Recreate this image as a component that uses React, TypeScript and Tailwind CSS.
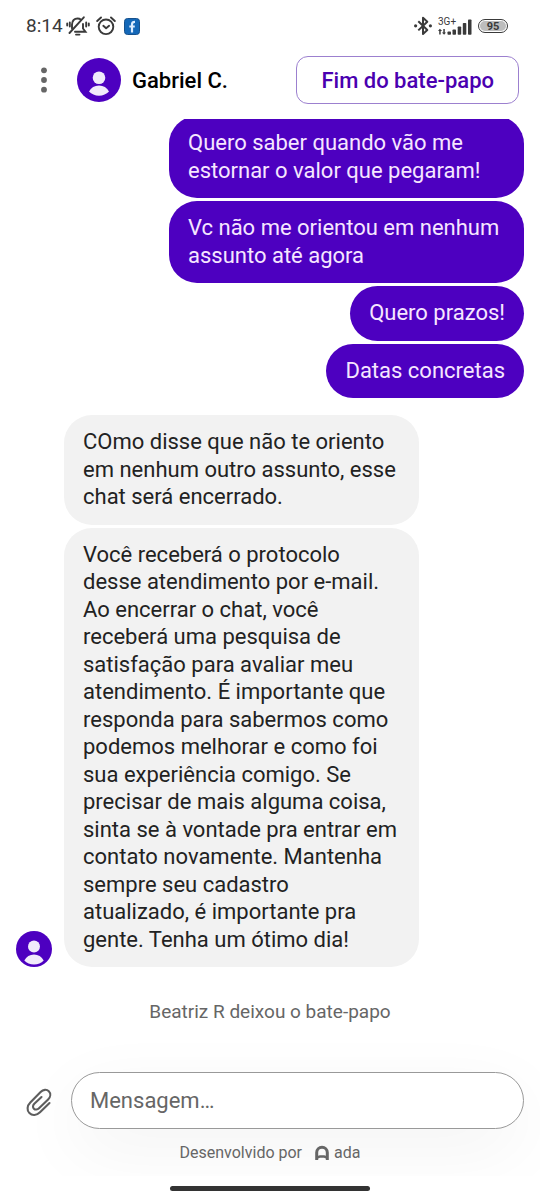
import { useState } from "react";

interface Message {
  id: number;
  text: string;
}

const userMessages: Message[] = [
  { id: 1, text: "Quero saber quando vão me estornar o valor que pegaram!" },
  { id: 2, text: "Vc não me orientou em nenhum assunto até agora" },
  { id: 3, text: "Quero prazos!" },
  { id: 4, text: "Datas concretas" },
];

const agentMessages: Message[] = [
  {
    id: 5,
    text: "COmo disse que não te oriento em nenhum outro assunto, esse chat será encerrado.",
  },
  {
    id: 6,
    text: "Você receberá o protocolo desse atendimento por e-mail. Ao encerrar o chat, você receberá uma pesquisa de satisfação para avaliar meu atendimento. É importante que responda para sabermos como podemos melhorar e como foi sua experiência comigo. Se precisar de mais alguma coisa, sinta se à vontade pra entrar em contato novamente. Mantenha sempre seu cadastro atualizado, é importante pra gente. Tenha um ótimo dia!",
  },
];

function MutedBellIcon() {
  return (
    <svg width="24" height="20" viewBox="0 0 24 20" fill="none" stroke="currentColor" strokeWidth="1.9" strokeLinecap="round">
      <path d="M6 12.500V8.500C6 4.500 8.500 2.500 11.500 2.500c1.300 0 2.500.4 3.500 1.200M17 8v4.500l2.500 3.200H9" />
      <path d="M17.800 1.300 3.500 17" />
      <path d="M10 18.600h3.500" />
      <path d="M3.800 6.500v4M1.200 7.500v2M20.200 6.500v4M22.800 7.500v2" />
    </svg>
  );
}

function AlarmIcon() {
  return (
    <svg width="20" height="20" viewBox="0 0 20 20" fill="none" stroke="currentColor" strokeWidth="1.9" strokeLinecap="round" strokeLinejoin="round">
      <circle cx="10" cy="10.800" r="7.300" />
      <path d="m7.300 9.800 2.800 2.500 3-2.500" />
      <path d="M1.200 5 5 1.500M18.800 5 15 1.500" />
    </svg>
  );
}

function FacebookIcon() {
  return (
    <svg width="16" height="17" viewBox="0 0 16 17">
      <rect x="0.500" y="0.500" width="15" height="16" rx="3" fill="#1468b8" stroke="#17518c" />
      <path d="M8 14.500V6.300c0-1.700.8-2.500 3-2.500M5.300 8.500h5.500" fill="none" stroke="#dcecff" strokeWidth="2.200" />
    </svg>
  );
}

function BluetoothIcon() {
  return (
    <svg width="18" height="20" viewBox="0 0 18 20" fill="none" stroke="currentColor" strokeWidth="2" strokeLinejoin="round">
      <path d="m4.300 5.300 9 8.700-4.300 4V1.700l4.300 4-9 8.700" />
      <circle cx="1.600" cy="9.800" r="1.600" fill="currentColor" stroke="none" />
      <circle cx="16.400" cy="9.800" r="1.600" fill="currentColor" stroke="none" />
    </svg>
  );
}

function SignalIcon() {
  return (
    <svg width="34" height="16" viewBox="0 0 34 16" fill="currentColor">
      <path d="M1.900 9.700 4.100 12H2.700v3.500H1.200V12H0zM6.100 15.700 3.900 13.400h1.400V9.900h1.500v3.500H8z" />
      <rect x="9.500" y="12.500" width="3.500" height="3.200" rx="0.800" />
      <rect x="14.500" y="10.500" width="3.500" height="5.200" rx="0.800" />
      <rect x="19.700" y="7.500" width="3.500" height="8.200" rx="0.800" />
      <rect x="24.800" y="4" width="3.500" height="11.700" rx="0.800" />
      <rect x="30" y="0.500" width="3.500" height="15.200" rx="0.800" />
    </svg>
  );
}

function PaperclipIcon() {
  return (
    <svg width="32" height="32" viewBox="0 0 32 32" fill="none" stroke="currentColor" strokeWidth="2.100" strokeLinecap="round">
      <path d="M27.500 18 18 27.300c-3.400 3.300-7.900 3.500-10.600.8s-2.400-7.200.9-10.500L18.600 7c2.600-2.600 6.100-2.900 8.200-.8s1.900 5.600-.7 8.200L17 23.300c-1.500 1.500-3.800 1.700-5.100.4s-1.200-3.500.4-5l7.200-6.700" />
    </svg>
  );
}

function AdaLogo() {
  return (
    <svg width="16" height="16" viewBox="0 0 16 16" fill="none" stroke="currentColor" strokeWidth="3">
      <path d="M2.700 15V7.500a5.300 5.300 0 0 1 10.600 0V15" />
      <path d="M2 13c1.500 0 2.500-1.500 4-1.500h4c1.500 0 2.500 1.500 4 1.500" strokeWidth="2.400" />
    </svg>
  );
}

function HeaderAvatar() {
  return (
    <svg className="size-11 shrink-0" viewBox="0 0 44 44">
      <circle cx="22" cy="22" r="22" fill="#4d00c0" />
      <circle cx="22" cy="19.700" r="6.300" fill="#f1eafb" />
      <path d="M12 33.500c2-4 5.500-6 10-6s8 2 10 6c-2.500 2.700-6 4.200-10 4.200s-7.500-1.500-10-4.200z" fill="#f1eafb" />
    </svg>
  );
}

function AgentAvatar() {
  return (
    <svg className="size-9 shrink-0" viewBox="0 0 36 36">
      <circle cx="18" cy="18" r="18" fill="#4d00c0" />
      <circle cx="18" cy="15.500" r="6" fill="#f1eafb" />
      <path d="M8.300 29.500c2-4 5.500-6 9.700-6s7.700 2 9.700 6c-2.500 2.700-5.700 4-9.700 4s-7.200-1.300-9.700-4z" fill="#f1eafb" />
    </svg>
  );
}

function StatusBar() {
  return (
    <div className="flex h-[52px] shrink-0 items-center justify-between pr-8 pl-[26px] text-[#3a3a3a]">
      <div className="flex items-center">
        <span className="text-[19px]">8:14</span>
        <span className="ml-[3px]">
          <MutedBellIcon />
        </span>
        <span className="ml-1.5">
          <AlarmIcon />
        </span>
        <span className="ml-2">
          <FacebookIcon />
        </span>
      </div>
      <div className="flex items-center">
        <BluetoothIcon />
        <div className="relative ml-1.5 flex h-[18px] items-end">
          <span className="absolute top-0 left-0 text-[10px] leading-none">3G+</span>
          <SignalIcon />
        </div>
        <div className="ml-1.5 flex h-3.5 w-[30px] items-center rounded-full border border-[#3a3a3a] p-px">
          <span className="flex h-full w-full items-center justify-center rounded-full bg-[#bdbdbd] text-[11px] leading-none font-bold">
            95
          </span>
        </div>
      </div>
    </div>
  );
}

function ChatHeader() {
  return (
    <header className="flex shrink-0 items-center pt-1 pr-[21px] pb-[15px] pl-8">
      <button type="button" aria-label="Menu" className="flex h-12 w-6 cursor-pointer items-center justify-center text-[#666666]">
        <svg width="6" height="26" viewBox="0 0 6 26" fill="currentColor">
          <circle cx="3" cy="3.300" r="2.900" />
          <circle cx="3" cy="13" r="2.900" />
          <circle cx="3" cy="22.700" r="2.900" />
        </svg>
      </button>
      <div className="ml-[21px] flex min-w-0 flex-1 items-center gap-[11px]">
        <HeaderAvatar />
        <h1 className="truncate text-[22px] font-medium text-black">Gabriel C.</h1>
      </div>
      <button
        type="button"
        className="h-12 shrink-0 cursor-pointer rounded-xl border border-[#9c80cf] px-6 text-[22px] font-medium text-[#4a00b0]"
      >
        Fim do bate-papo
      </button>
    </header>
  );
}

function Bubble({ text, fromUser = false }: { text: string; fromUser?: boolean }) {
  return (
    <p
      className={`max-w-[355px] rounded-[28px] px-[19px] pt-[13px] pb-3.5 text-[22px] leading-tight ${
        fromUser ? "bg-[#4d00c0] text-[#f6e6ff]" : "bg-[#f2f2f2] text-[#222222]"
      }`}
    >
      {text}
    </p>
  );
}

export default function App() {
  const [draft, setDraft] = useState("");

  return (
    <div className="flex h-screen flex-col overflow-hidden bg-white font-['Roboto',sans-serif]">
      <StatusBar />
      <ChatHeader />

      {/* Reversed column keeps the newest message in view */}
      <main className="flex min-h-0 flex-1 flex-col-reverse overflow-y-auto px-4 [scrollbar-width:none]">
        <div className="flex flex-col pb-4">
          <div className="flex flex-col items-end gap-[3px]">
            {userMessages.map((m) => (
              <Bubble key={m.id} text={m.text} fromUser />
            ))}
          </div>
          <div className="mt-[17px] flex items-end gap-3">
            <AgentAvatar />
            <div className="flex flex-col items-start gap-[3px]">
              {agentMessages.map((m) => (
                <Bubble key={m.id} text={m.text} />
              ))}
            </div>
          </div>
          <p className="mt-[33px] text-center text-[19px] leading-6 text-[#666666]">Beatriz R deixou o bate-papo</p>
        </div>
      </main>

      <footer className="shrink-0 overflow-hidden px-4 pt-8 pb-[11px]">
        <div className="flex items-center">
          <button type="button" aria-label="Anexar arquivo" className="mr-[17px] ml-1.5 cursor-pointer text-[#5e5e5e]">
            <PaperclipIcon />
          </button>
          <input
            type="text"
            aria-label="Mensagem"
            placeholder="Mensagem…"
            value={draft}
            onChange={(e) => setDraft(e.target.value)}
            className="h-[57px] min-w-0 flex-1 rounded-full border border-[#999999] bg-white px-[18px] text-[22px] text-[#222222] shadow-[0_20px_70px_rgba(0,0,0,0.05)] outline-none placeholder:text-[#666666]"
          />
        </div>
        <div className="relative mt-3 flex items-center justify-center text-base text-[#666666]">
          <span>Desenvolvido por</span>
          <span className="ml-3">
            <AdaLogo />
          </span>
          <span className="ml-1">ada</span>
        </div>
      </footer>

      <div className="flex h-6 shrink-0 items-center justify-center">
        <div className="h-[5px] w-[200px] rounded-full bg-[#333333]" />
      </div>
    </div>
  );
}
